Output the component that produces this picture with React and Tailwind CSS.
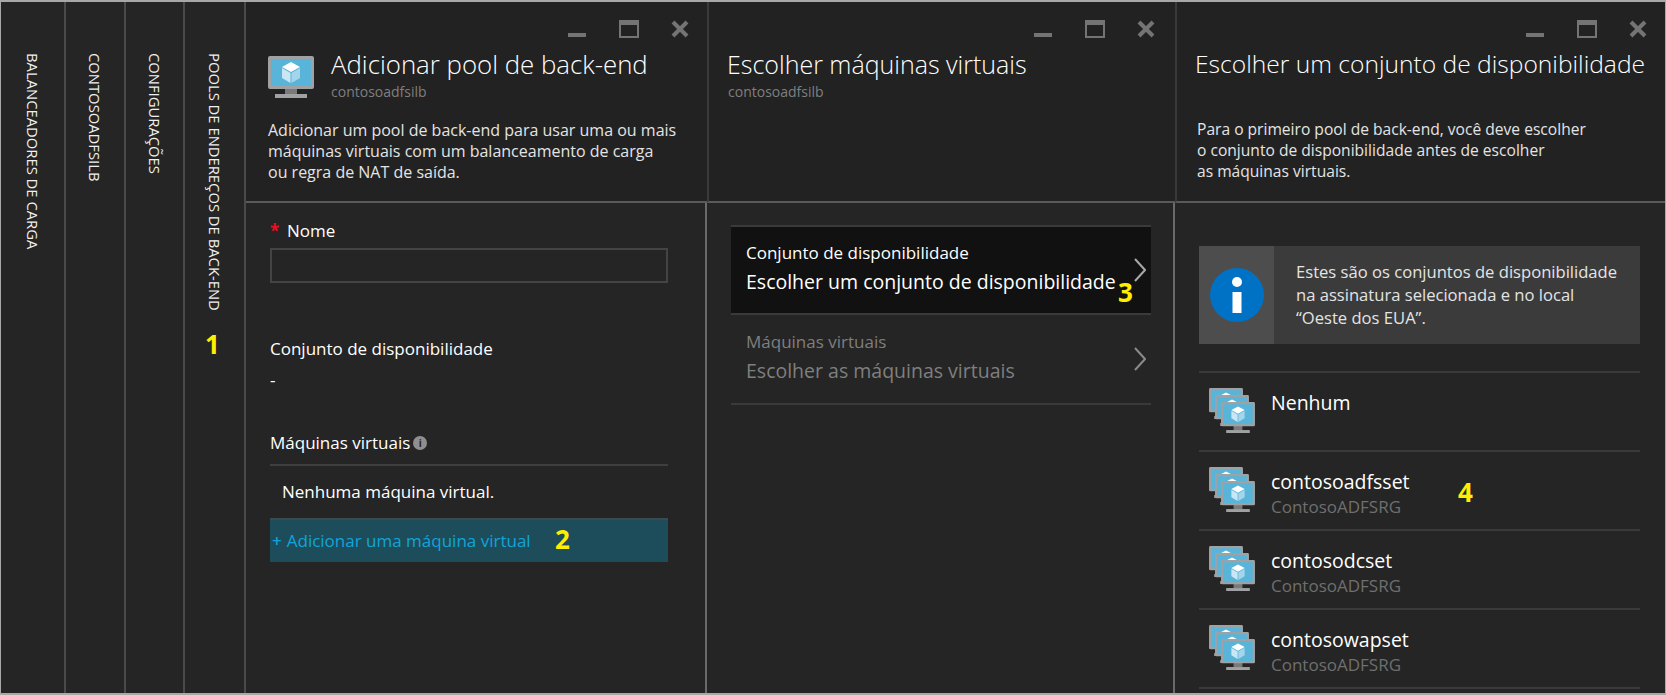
const WindowControls = ({ className }) => (
  <div className={`flex justify-end h-[18px] mt-[18px] ${className}`}>
    <svg width="122" height="18" viewBox="0 0 122 18" fill="none">
      <rect x="0" y="13" width="18" height="4" fill="#747474" />
      <rect x="52" y="1" width="18" height="16" fill="none" stroke="#747474" strokeWidth="2" />
      <rect x="52" y="1" width="18" height="4" fill="#747474" />
      <path d="M105 2 L119 16 M119 2 L105 16" stroke="#747474" strokeWidth="4" />
    </svg>
  </div>
);

const Monitor = ({ x = 0, y = 0, w = 46, h = 42 }) => (
  <svg x={x} y={y} width={w} height={h} viewBox="0 0 46 42">
    <rect x="17" y="32" width="12" height="6" fill="#7a7a7a" />
    <rect x="7" y="38" width="32" height="4" fill="#a0a1a2" />
    <rect x="0" y="0" width="46" height="33" rx="2" fill="#a0a1a2" />
    <rect x="3" y="3" width="40" height="27" fill="#59b4d9" />
    <path d="M23 6 L32 11 L23 16 L14 11 Z" fill="#ffffff" />
    <path d="M14 12 L22.5 17 L22.5 27 L14 22 Z" fill="#c8e6f3" />
    <path d="M32 12 L23.5 17 L23.5 27 L32 22 Z" fill="#a4d5ea" />
  </svg>
);

const VmIcon = () => (
  <svg width="46" height="42" viewBox="0 0 46 42" className="block shrink-0">
    <Monitor />
  </svg>
);

const VmStackIcon = () => (
  <svg width="46" height="46" viewBox="0 0 46 46" className="block shrink-0">
    <Monitor x={0} y={0} w={34} h={31} />
    <Monitor x={6} y={7} w={34} h={31} />
    <Monitor x={12} y={14} w={34} h={31} />
  </svg>
);

const Chevron = ({ color }) => (
  <svg width="12" height="24" viewBox="0 0 12 24" fill="none" className="shrink-0">
    <path d="M1 1 L11 12 L1 23" stroke={color} strokeWidth="2" />
  </svg>
);

const Collapsed = ({ label, width }) => (
  <div className={`${width} shrink-0 border-r-2 border-[#4a4a4a] flex justify-center pt-[51px]`}>
    <span className="[writing-mode:vertical-rl] text-[14.8px] font-medium text-[#f0f0f0] leading-none whitespace-nowrap">{label}</span>
  </div>
);

const Title = ({ children, className }) => (
  <h2 className={`font-light leading-[32px] text-white whitespace-nowrap ${className}`}>{children}</h2>
);

const Sub = ({ children, className }) => (
  <p className={`text-[14px] leading-[18px] text-[#7f7f7f] ${className}`}>{children}</p>
);

const Desc = ({ lines, className }) => (
  <p className={`leading-[21px] text-[#e4e4e4] whitespace-nowrap ${className}`}>
    {lines.map((l) => <span key={l} className="block">{l}</span>)}
  </p>
);

const PickRow = ({ label, value, active }) => (
  <div className={`h-[90px] flex items-center pl-[15px] pr-[5px] ${active ? 'bg-[#111111] border-y-2 border-[#3a3a3a]' : 'border-b-2 border-[#3a3a3a]'}`}>
    <div className="flex-1 whitespace-nowrap">
      <div className={`text-[17px] leading-[22px] ${active ? 'text-white' : 'text-[#7f7f7f]'}`}>{label}</div>
      <div className={`text-[19.5px] leading-[34px] mt-[1px] ${active ? 'text-white' : 'text-[#7f7f7f]'}`}>{value}</div>
    </div>
    <Chevron color={active ? '#a8a8a8' : '#8a8a8a'} />
  </div>
);

const SetRow = ({ name, group }) => (
  <div className="h-[79px] border-b-2 border-[#3a3a3a] flex pl-[10px] pt-[15px] gap-[16px]">
    <VmStackIcon />
    <div className="whitespace-nowrap">
      <div className="text-[19.5px] leading-[30px] text-white">{name}</div>
      {group && <div className="text-[17px] leading-[20px] text-[#6f6f6f]">{group}</div>}
    </div>
  </div>
);

const Badge = ({ className, children }) => (
  <span className={`absolute text-[26px] leading-none font-bold text-[#ffee00] ${className}`}>{children}</span>
);

export default function App() {
  return (
    <div className="relative w-[1666px] h-[695px] flex bg-[#252525] border-t-2 border-l border-r border-b-2 border-[#a8a8a8] overflow-hidden [font-family:'Open_Sans',sans-serif]">
      <Collapsed label="BALANCEADORES DE CARGA" width="w-[65px]" />
      <Collapsed label="CONTOSOADFSILB" width="w-[60px]" />
      <Collapsed label="CONFIGURAÇÕES" width="w-[59px]" />
      <Collapsed label="POOLS DE ENDEREÇOS DE BACK-END" width="w-[61px]" />

      {/* Adicionar pool */}
      <section className="w-[461px] shrink-0 flex flex-col">
        <header className="h-[201px] shrink-0 bg-[#222222] border-b-2 border-[#5a5a5a]">
          <WindowControls className="mr-[17px]" />
          <div className="flex pl-[22px] mt-[18px] gap-[17px]">
            <VmIcon />
            <div>
              <Title className="text-[25.8px] -mt-[8px]">Adicionar pool de back-end</Title>
              <Sub className="mt-[3px]">contosoadfsilb</Sub>
            </div>
          </div>
          <Desc className="text-[16px] pl-[22px] mt-[19px]" lines={['Adicionar um pool de back-end para usar uma ou mais', 'máquinas virtuais com um balanceamento de carga', 'ou regra de NAT de saída.']} />
        </header>
        <div className="flex-1 border-r-2 border-[#6a6a6a] pl-[24px] pr-[37px] pt-[17px] text-white text-[17px]">
          <div className="h-[22px] leading-[22px] flex"><span className="text-[#e81123] w-[17px] font-bold">*</span>Nome</div>
          <div className="h-[35px] mt-[6px] border-2 border-[#444444]" />
          <div className="mt-[55px] h-[22px] leading-[22px]">Conjunto de disponibilidade</div>
          <div className="mt-[9px] h-[22px] leading-[22px]">-</div>
          <div className="mt-[41px] h-[22px] leading-[22px] flex items-center gap-[3px]">
            Máquinas virtuais
            <span className="w-[14px] h-[14px] rounded-full bg-[#8f8f8f] flex items-center justify-center text-[10px] font-bold text-[#252525]">i</span>
          </div>
          <div className="h-[2px] bg-[#3f3f3f] mt-[10px]" />
          <div className="h-[52px] leading-[52px] pl-[12px]">Nenhuma máquina virtual.</div>
          <div className="h-[44px] bg-[#1d4d5a] border-t-2 border-[#3a4a4e] flex items-center pl-[2px] text-[#12a4d8] gap-[5px]">
            <span className="font-semibold">+</span>Adicionar uma máquina virtual
          </div>
        </div>
      </section>

      {/* Escolher maquinas */}
      <section className="w-[468px] shrink-0 flex flex-col">
        <header className="h-[201px] shrink-0 bg-[#222222] border-b-2 border-l-2 border-b-[#5a5a5a] border-l-[#3a3a3a] pl-[18px]">
          <WindowControls className="mr-[19px]" />
          <Title className="text-[25px] mt-[10px]">Escolher máquinas virtuais</Title>
          <Sub className="mt-[3px] pl-[1px]">contosoadfsilb</Sub>
        </header>
        <div className="flex-1 border-r-2 border-[#6a6a6a] pl-[24px] pr-[22px] pt-[22px]">
          <PickRow active label="Conjunto de disponibilidade" value="Escolher um conjunto de disponibilidade" />
          <PickRow label="Máquinas virtuais" value="Escolher as máquinas virtuais" />
        </div>
      </section>

      {/* Escolher conjunto */}
      <section className="flex-1 flex flex-col">
        <header className="h-[201px] shrink-0 bg-[#222222] border-b-2 border-l-2 border-b-[#5a5a5a] border-l-[#3a3a3a] pl-[18px]">
          <WindowControls className="mr-[17px]" />
          <Title className="text-[24.6px] mt-[10px]">Escolher um conjunto de disponibilidade</Title>
          <Desc className="text-[15.6px] pl-[2px] mt-[39px]" lines={['Para o primeiro pool de back-end, você deve escolher', 'o conjunto de disponibilidade antes de escolher', 'as máquinas virtuais.']} />
        </header>
        <div className="flex-1 pl-[24px] pr-[25px] pt-[43px]">
          <div className="h-[98px] bg-[#3b3b3b] flex">
            <div className="w-[75px] bg-[#4d4d4d] flex items-center justify-center">
              <svg width="54" height="54" viewBox="0 0 54 54">
                <circle cx="27" cy="27" r="27" fill="#0072c6" />
                <circle cx="27" cy="14" r="5" fill="#ffffff" />
                <rect x="22.5" y="24" width="9" height="21" fill="#ffffff" />
              </svg>
            </div>
            <p className="pl-[22px] pt-[14px] text-[16.6px] leading-[23px] text-[#e4e4e4] whitespace-nowrap">
              <span className="block">Estes são os conjuntos de disponibilidade</span>
              <span className="block">na assinatura selecionada e no local</span>
              <span className="block">“Oeste dos EUA”.</span>
            </p>
          </div>
          <div className="mt-[27px] border-t-2 border-[#3a3a3a]">
            <SetRow name="Nenhum" />
            <SetRow name="contosoadfsset" group="ContosoADFSRG" />
            <SetRow name="contosodcset" group="ContosoADFSRG" />
            <SetRow name="contosowapset" group="ContosoADFSRG" />
          </div>
        </div>
      </section>

      <Badge className="left-[204px] top-[329px]">1</Badge>
      <Badge className="left-[554px] top-[524px]">2</Badge>
      <Badge className="left-[1117px] top-[277px]">3</Badge>
      <Badge className="left-[1457px] top-[477px]">4</Badge>
    </div>
  );
}
